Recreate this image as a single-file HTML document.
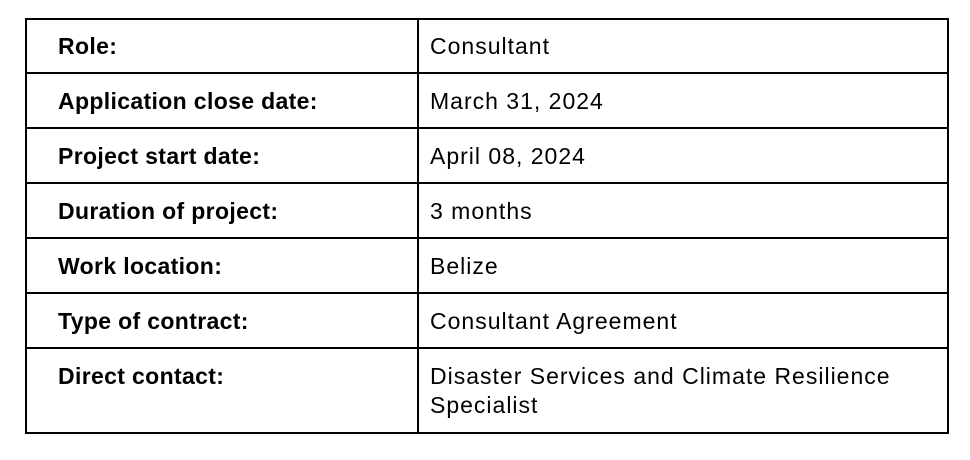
<!DOCTYPE html>
<html><head><style>
html,body{margin:0;padding:0;background:#fff;width:970px;height:460px;overflow:hidden}
.l{position:absolute;background:#000}
.t{position:absolute;font-family:"Liberation Sans",Arial,sans-serif;font-size:23px;color:#000;line-height:29px;white-space:nowrap}
.b{font-weight:bold;left:58px;letter-spacing:0.35px}
.v{left:430px;letter-spacing:1px}
</style></head><body>
<div class="l" style="left:25px;top:18px;width:924px;height:2px"></div>
<div class="l" style="left:25px;top:432px;width:924px;height:2px"></div>
<div class="l" style="left:25px;top:18px;width:2px;height:416px"></div>
<div class="l" style="left:947px;top:18px;width:2px;height:416px"></div>
<div class="l" style="left:417px;top:18px;width:2px;height:416px"></div>
<div class="l" style="left:25px;top:72px;width:924px;height:2px"></div>
<div class="l" style="left:25px;top:127px;width:924px;height:2px"></div>
<div class="l" style="left:25px;top:182px;width:924px;height:2px"></div>
<div class="l" style="left:25px;top:237px;width:924px;height:2px"></div>
<div class="l" style="left:25px;top:292px;width:924px;height:2px"></div>
<div class="l" style="left:25px;top:347px;width:924px;height:2px"></div>

<div class="t b" style="top:32px">Role:</div>
<div class="t v" style="top:32px">Consultant</div>
<div class="t b" style="top:87px">Application close date:</div>
<div class="t v" style="top:87px">March 31, 2024</div>
<div class="t b" style="top:142px">Project start date:</div>
<div class="t v" style="top:142px">April 08, 2024</div>
<div class="t b" style="top:197px">Duration of project:</div>
<div class="t v" style="top:197px">3 months</div>
<div class="t b" style="top:252px">Work location:</div>
<div class="t v" style="top:252px">Belize</div>
<div class="t b" style="top:307px">Type of contract:</div>
<div class="t v" style="top:307px">Consultant Agreement</div>
<div class="t b" style="top:362px">Direct contact:</div>
<div class="t v" style="top:362px">Disaster Services and Climate Resilience<br>Specialist</div>
</body></html>
